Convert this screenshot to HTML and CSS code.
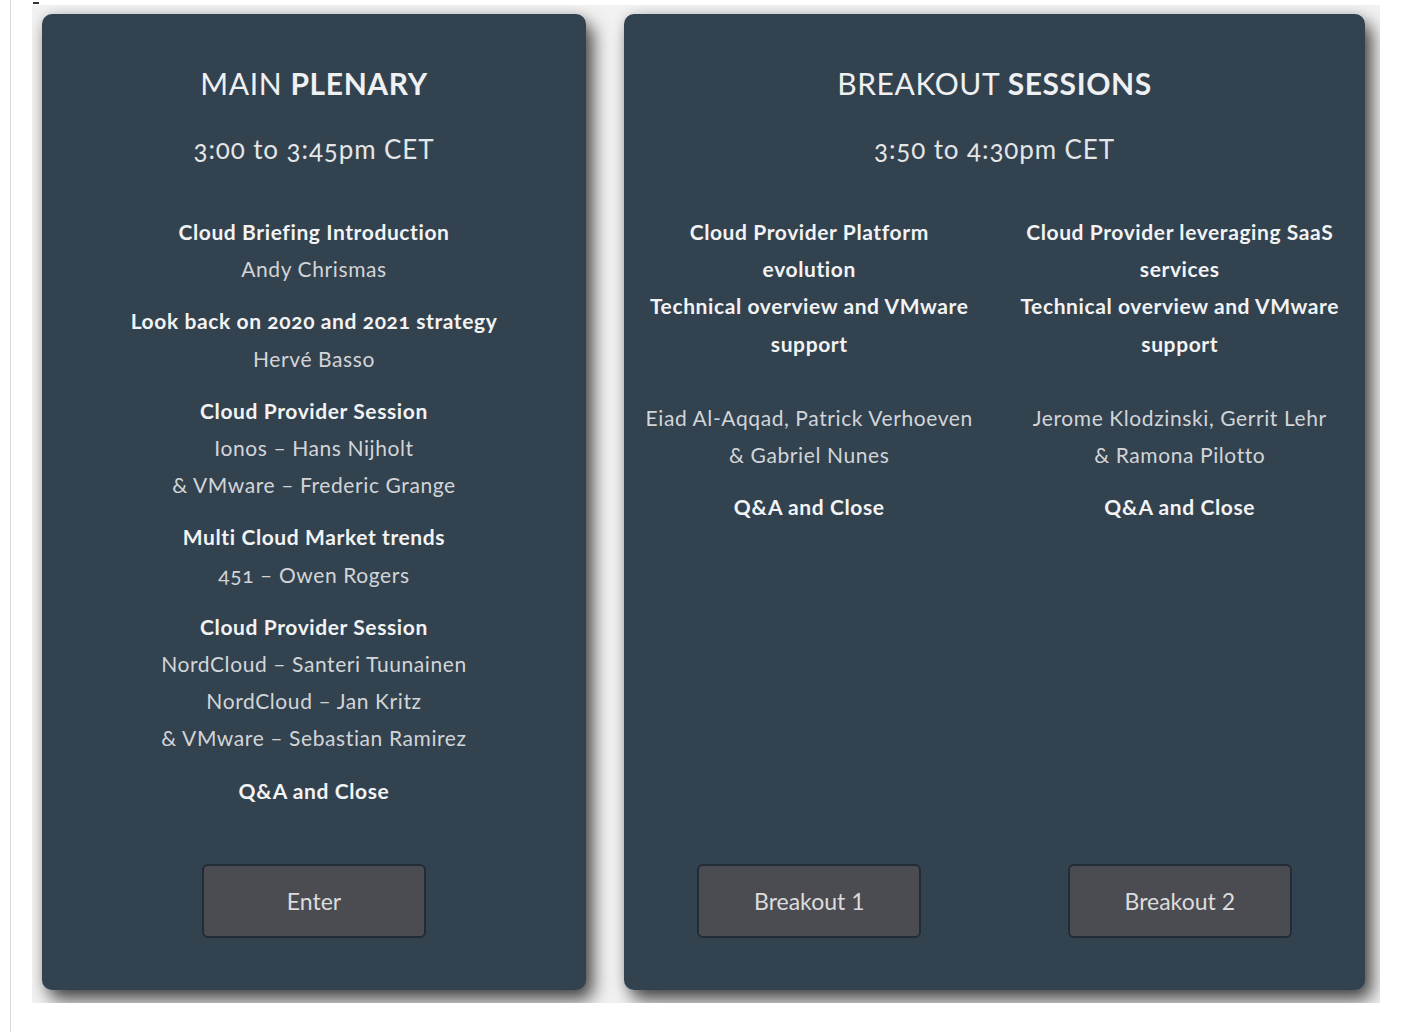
FILE: index.html
```html
<!DOCTYPE html>
<html lang="en">
<head>
    <meta charset="UTF-8">
    <meta name="viewport" content="width=device-width, initial-scale=1.0">
    <title>Cloud Briefing - Agenda</title>
    <link rel="stylesheet" href="styles.css">
</head>
<body>
    <div class="frame">
        <span class="mark"></span>
        <div class="board">
            <!-- Main plenary -->
            <section class="card card-main">
                <h2 class="card-title">MAIN <b>PLENARY</b></h2>
                <p class="card-time">3:00 to 3:45pm CET</p>

                <div class="agenda">
                    <div class="item">
                        <h3>Cloud Briefing Introduction</h3>
                        <p>Andy Chrismas</p>
                    </div>
                    <div class="item">
                        <h3>Look back on 2020 and 2021 strategy</h3>
                        <p>Hervé Basso</p>
                    </div>
                    <div class="item">
                        <h3>Cloud Provider Session</h3>
                        <p>Ionos – Hans Nijholt</p>
                        <p>&amp; VMware – Frederic Grange</p>
                    </div>
                    <div class="item">
                        <h3>Multi Cloud Market trends</h3>
                        <p>451 – Owen Rogers</p>
                    </div>
                    <div class="item">
                        <h3>Cloud Provider Session</h3>
                        <p>NordCloud – Santeri Tuunainen</p>
                        <p>NordCloud – Jan Kritz</p>
                        <p>&amp; VMware – Sebastian Ramirez</p>
                    </div>
                    <div class="item">
                        <h3>Q&amp;A and Close</h3>
                    </div>
                </div>

                <div class="actions">
                    <button class="btn">Enter</button>
                </div>
            </section>

            <!-- Breakout sessions -->
            <section class="card card-breakout">
                <h2 class="card-title">BREAKOUT <b>SESSIONS</b></h2>
                <p class="card-time">3:50 to 4:30pm CET</p>

                <div class="columns">
                    <div class="agenda">
                        <div class="item">
                            <h3>Cloud Provider Platform evolution</h3>
                            <h3>Technical overview and VMware support</h3>
                        </div>
                        <div class="item speakers">
                            <p>Eiad Al-Aqqad, Patrick Verhoeven</p>
                            <p>&amp; Gabriel Nunes</p>
                        </div>
                        <div class="item">
                            <h3>Q&amp;A and Close</h3>
                        </div>
                    </div>
                    <div class="agenda">
                        <div class="item">
                            <h3>Cloud Provider leveraging SaaS services</h3>
                            <h3>Technical overview and VMware support</h3>
                        </div>
                        <div class="item speakers">
                            <p>Jerome Klodzinski, Gerrit Lehr</p>
                            <p>&amp; Ramona Pilotto</p>
                        </div>
                        <div class="item">
                            <h3>Q&amp;A and Close</h3>
                        </div>
                    </div>
                </div>

                <div class="actions columns">
                    <div class="slot"><button class="btn">Breakout 1</button></div>
                    <div class="slot"><button class="btn">Breakout 2</button></div>
                </div>
            </section>
        </div>
    </div>
</body>
</html>
```

FILE: styles.css
```css
* {
    margin: 0;
    padding: 0;
    box-sizing: border-box;
}

body {
    background: #fff;
    font-family: Lato, "Open Sans", sans-serif;
    font-variant-numeric: oldstyle-nums;
    padding-left: 10px;
}

.frame {
    position: relative;
    border-left: 1px solid #d8d8d8;
    height: 1032px;
    padding-top: 5px;
    padding-left: 21px;
}

.mark {
    position: absolute;
    left: 22px;
    top: 2px;
    width: 6px;
    height: 2px;
    background: #333;
}

.board {
    display: flex;
    gap: 38px;
    width: 1348px;
    height: 998px;
    padding: 9px 10px;
    background: #f2f2f2;
    overflow: hidden;
}

.card {
    display: flex;
    flex-direction: column;
    height: 976px;
    background: #33424f;
    border-radius: 10px;
    box-shadow: 7px 10px 18px rgba(0, 0, 0, 0.7), 0 0 12px rgba(0, 0, 0, 0.12);
    color: #d6d8da;
    text-align: center;
    padding: 49px 0 52px;
}

.card-main {
    width: 544px;
}

.card-breakout {
    width: 741px;
}

.card-title {
    font-size: 30px;
    font-weight: 400;
    line-height: 40px;
    letter-spacing: 0.6px;
    color: #eef0f2;
}

.card-title b {
    font-weight: 700;
}

.card-time {
    font-size: 26px;
    line-height: 36px;
    letter-spacing: 0.9px;
    margin-top: 28px;
    color: #e4e6e8;
}

.agenda {
    margin-top: 46px;
    display: flex;
    flex-direction: column;
    gap: 15px;
}

.item h3 {
    font-size: 21px;
    font-weight: 700;
    line-height: 37.2px;
    letter-spacing: 0.6px;
    color: #f2f3f4;
}

.item p {
    font-size: 21px;
    line-height: 37.2px;
    letter-spacing: 0.6px;
    color: #d2d5d8;
}

.columns {
    display: flex;
}

.columns > * {
    flex: 1;
    padding: 0 20px;
}

.item.speakers {
    margin-top: 22px;
}

.actions {
    margin-top: auto;
}

.btn {
    width: 224px;
    height: 74px;
    background: #4b4c51;
    border: 2px solid #222c36;
    border-radius: 6px;
    color: #dcdcdc;
    font-family: inherit;
    font-size: 23px;
}
```
